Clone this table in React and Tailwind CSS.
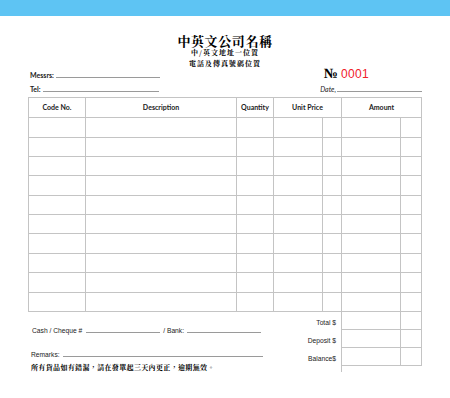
import React from "react";

const cjk = "font-['Noto_Serif_CJK_TC','Noto_Sans_CJK_TC',serif]";
const lato = "font-['Lato','Noto_Sans',sans-serif]";
const arial = "font-['Liberation_Sans',Arial,sans-serif]";

const COLS = ["w-[57px]", "w-[151px]", "w-[37px]", "w-[49px]", "w-[19px]", "w-[59px]", "w-[21px]"];
const ROWS = ["h-[20px]", "h-[19px]", "h-[19px]", "h-[20px]", "h-[19px]", "h-[19px]", "h-[20px]", "h-[19px]", "h-[20px]", "h-[19px]"];

function Line({ w }) {
  return <span className={`inline-block ${w} border-b border-[#9a9a9a]`} />;
}

export default function App() {
  return (
    <div className="w-[450px] h-[398px] bg-white overflow-hidden">
      {/* top bar */}
      <div className="h-[16px] bg-[#5ec4f3]" />

      <div className="px-[28px]">
        {/* company header */}
        <div className={`${cjk} text-center text-black mt-[19px]`}>
          <div className="h-[12px] leading-[12px] text-[13px] font-bold tracking-[0.6px]">中英文公司名稱</div>
          <div className="h-[11px] leading-[11px] text-[7px] font-bold tracking-[1px]">中/英文地址一位置</div>
          <div className="h-[11px] leading-[11px] text-[7px] font-bold tracking-[1px]">電話及傳真號碼位置</div>
        </div>

        {/* Messrs / No. */}
        <div className="flex items-center h-[12px]">
          <div className={`flex items-baseline pl-[2px] ${lato} text-[7px] font-bold text-[#222]`}>
            <span className="mr-[2px]">Messrs:</span>
            <Line w="w-[104px]" />
          </div>
          <div className="ml-auto mr-[53px] flex items-center -mt-[2px]">
            <span className="font-['Liberation_Serif',serif] font-bold text-[14px] leading-none text-black">№</span>
            <span className={`${arial} text-[12px] leading-none text-[#f0202a] ml-[3px] tracking-[0.3px]`}>0001</span>
          </div>
        </div>

        {/* Tel / Date */}
        <div className="flex items-center h-[12px] mt-[2px]">
          <div className={`flex items-baseline pl-[2px] ${lato} text-[7px] font-bold text-[#222]`}>
            <span className="mr-[2px]">Tel:</span>
            <Line w="w-[116px]" />
          </div>
          <div className={`ml-auto flex items-baseline ${lato} text-[7px] italic text-[#222]`}>
            <span className="mr-[1px]">Date,</span>
            <Line w="w-[85px]" />
          </div>
        </div>

        {/* table */}
        <div className="mt-[2px] border-l border-t border-[#c4c4c4]">
          <div className={`flex ${lato} text-[7px] font-bold text-[#222]`}>
            {[
              ["Code No.", "w-[57px]"],
              ["Description", "w-[151px]"],
              ["Quantity", "w-[37px]"],
              ["Unit Price", "w-[68px]"],
              ["Amount", "w-[80px]"],
            ].map(([t, w]) => (
              <div key={t} className={`${w} h-[20px] flex items-center justify-center border-r border-b border-[#c4c4c4]`}>
                {t}
              </div>
            ))}
          </div>
          {ROWS.map((h, r) => (
            <div key={r} className="flex">
              {COLS.map((w, c) => (
                <div key={c} className={`${w} ${h} border-r border-b border-[#c4c4c4]`} />
              ))}
            </div>
          ))}
        </div>

        {/* bottom */}
        <div className="flex">
          <div className="w-[313px] flex">
            <div className="flex-1">
              <div className={`flex items-baseline pl-[4px] mt-[14px] ${arial} text-[6.7px] text-[#222]`}>
                <span className="mr-[4px]">Cash / Cheque #</span>
                <Line w="w-[74px]" />
                <span className="ml-[3px] mr-[3px]">/ Bank:</span>
                <Line w="w-[74px]" />
              </div>
              <div className={`flex items-baseline pl-[3px] mt-[14px] ${arial} text-[6.7px] text-[#222]`}>
                <span className="mr-[3px]">Remarks:</span>
                <Line w="w-[200px]" />
              </div>
              <div className={`pl-[3px] mt-[2px] ${cjk} text-[7px] leading-[10px] font-bold tracking-[0.35px] text-black`}>
                所有貨品如有錯漏，請在發單起三天內更正，逾期無效。
              </div>
            </div>
            <div className={`flex flex-col items-end pr-[5px] ${arial} text-[6.7px] text-[#222]`}>
              <div className="h-[19px] flex items-center pt-[3px]">Total $</div>
              <div className="h-[18px] flex items-center pt-[3px]">Deposit $</div>
              <div className="h-[18px] flex items-center pt-[3px]">Balance$</div>
            </div>
          </div>
          <div className="border-l border-[#c4c4c4]">
            {["h-[18px]", "h-[18px]", "h-[18px]"].map((h, r) => (
              <div key={r} className="flex">
                <div className={`w-[59px] ${h} border-r border-b border-[#c4c4c4]`} />
                <div className={`w-[21px] ${h} border-r border-b border-[#c4c4c4]`} />
              </div>
            ))}
          </div>
        </div>
      </div>
    </div>
  );
}
